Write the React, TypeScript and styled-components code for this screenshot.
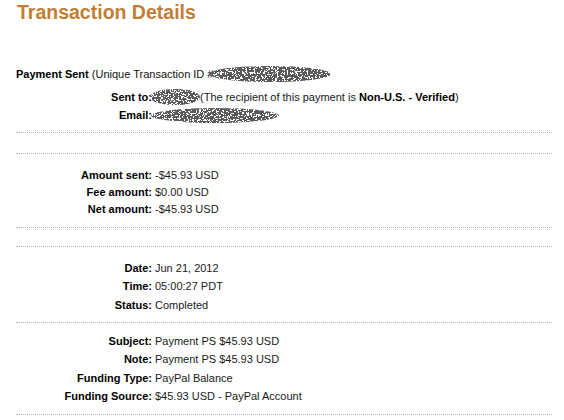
import React, { useId } from 'react';
import styled, { createGlobalStyle } from 'styled-components';

const GlobalStyle = createGlobalStyle`
  html, body {
    margin: 0;
    padding: 0;
    background: #ffffff;
  }
  body {
    font-family: "Liberation Sans", Arial, sans-serif;
    font-size: 11px;
    color: #111;
  }
`;

const Page = styled.div`
  width: 536px;
  padding: 1px 12px 0 16px;
`;

const Title = styled.h1`
  margin: 0 0 0 1px;
  font-size: 19.5px;
  line-height: 23px;
  font-weight: bold;
  color: #c27e35;
`;

const Section = styled.div<{ $top?: number; $bottom?: number; $height?: number }>`
  padding-top: ${p => p.$top ?? 0}px;
  padding-bottom: ${p => p.$bottom ?? 0}px;
  ${p => (p.$height !== undefined ? `height: ${p.$height}px;` : '')}
  border-bottom: 1px dotted #b4b4b4;
`;

const HeaderLine = styled.div`
  margin-top: 41px;
  line-height: 18px;
  white-space: nowrap;
  display: flex;
  align-items: center;
`;

const Row = styled.div<{ $h?: number; $gap?: number }>`
  display: grid;
  grid-template-columns: 136px 1fr;
  column-gap: 3px;
  line-height: ${p => p.$h ?? 18}px;
  margin-top: ${p => p.$gap ?? 0}px;
  white-space: nowrap;
`;

const Label = styled.span`
  font-weight: bold;
  text-align: right;
  color: #000;
`;

const Value = styled.span`
  color: #1a1a1a;
  display: flex;
  align-items: center;
`;

const Strong = styled.b`
  color: #000;
`;

const BlobWrap = styled.svg<{ $shift?: number }>`
  display: inline-block;
  flex: none;
  margin-left: ${p => p.$shift ?? 0}px;
`;

function Redacted({ w, h, seed, shift }: { w: number; h: number; seed: number; shift?: number }) {
  const id = useId().replace(/:/g, '');
  return (
    <BlobWrap width={w} height={h} viewBox={`0 0 ${w} ${h}`} $shift={shift}>
      <defs>
        <filter id={`f${id}`} x="0" y="0" width="100%" height="100%">
          <feTurbulence type="fractalNoise" baseFrequency="0.6" numOctaves="2" seed={seed} result="noise" />
          <feColorMatrix
            in="noise"
            type="matrix"
            values="0 0 0 0 0.1  0 0 0 0 0.1  0 0 0 0 0.1  4 0 0 0 -1.25"
            result="dots"
          />
          <feComponentTransfer in="dots" result="hard">
            <feFuncA type="discrete" tableValues="0 1" />
          </feComponentTransfer>
          <feComposite in="hard" in2="SourceGraphic" operator="in" />
        </filter>
      </defs>
      <ellipse cx={w / 2} cy={h / 2} rx={w / 2} ry={h / 2} fill="#000" filter={`url(#f${id})`} />
    </BlobWrap>
  );
}

const App: React.FC = () => {
  return (
    <>
      <GlobalStyle />
      <Page>
        <Title>Transaction Details</Title>

        <Section $bottom={8}>
          <HeaderLine>
            <Strong>Payment Sent</Strong>&nbsp;(Unique Transaction ID #
            <Redacted w={122} h={16} seed={3} shift={-4} />
          </HeaderLine>
          <Row $gap={5}>
            <Label>Sent to:</Label>
            <Value>
              <Redacted w={50} h={16} seed={7} shift={-5} />
              (The recipient of this payment is&nbsp;<Strong>Non-U.S. - Verified</Strong>)
            </Value>
          </Row>
          <Row>
            <Label>Email:</Label>
            <Value>
              <Redacted w={128} h={15} seed={11} shift={-4} />
            </Value>
          </Row>
        </Section>

        <Section $height={20} />

        <Section $top={13} $bottom={9}>
          <Row $h={17}>
            <Label>Amount sent:</Label>
            <Value>-$45.93 USD</Value>
          </Row>
          <Row $h={17}>
            <Label>Fee amount:</Label>
            <Value>$0.00 USD</Value>
          </Row>
          <Row $h={17}>
            <Label>Net amount:</Label>
            <Value>-$45.93 USD</Value>
          </Row>
        </Section>

        <Section $height={18} />

        <Section $top={12} $bottom={8}>
          <Row>
            <Label>Date:</Label>
            <Value>Jun 21, 2012</Value>
          </Row>
          <Row>
            <Label>Time:</Label>
            <Value>05:00:27 PDT</Value>
          </Row>
          <Row $gap={1}>
            <Label>Status:</Label>
            <Value>Completed</Value>
          </Row>
        </Section>

        <Section $top={9} $bottom={9}>
          <Row>
            <Label>Subject:</Label>
            <Value>Payment PS $45.93 USD</Value>
          </Row>
          <Row>
            <Label>Note:</Label>
            <Value>Payment PS $45.93 USD</Value>
          </Row>
          <Row $gap={1}>
            <Label>Funding Type:</Label>
            <Value>PayPal Balance</Value>
          </Row>
          <Row>
            <Label>Funding Source:</Label>
            <Value>$45.93 USD - PayPal Account</Value>
          </Row>
        </Section>
      </Page>
    </>
  );
};

export default App;
